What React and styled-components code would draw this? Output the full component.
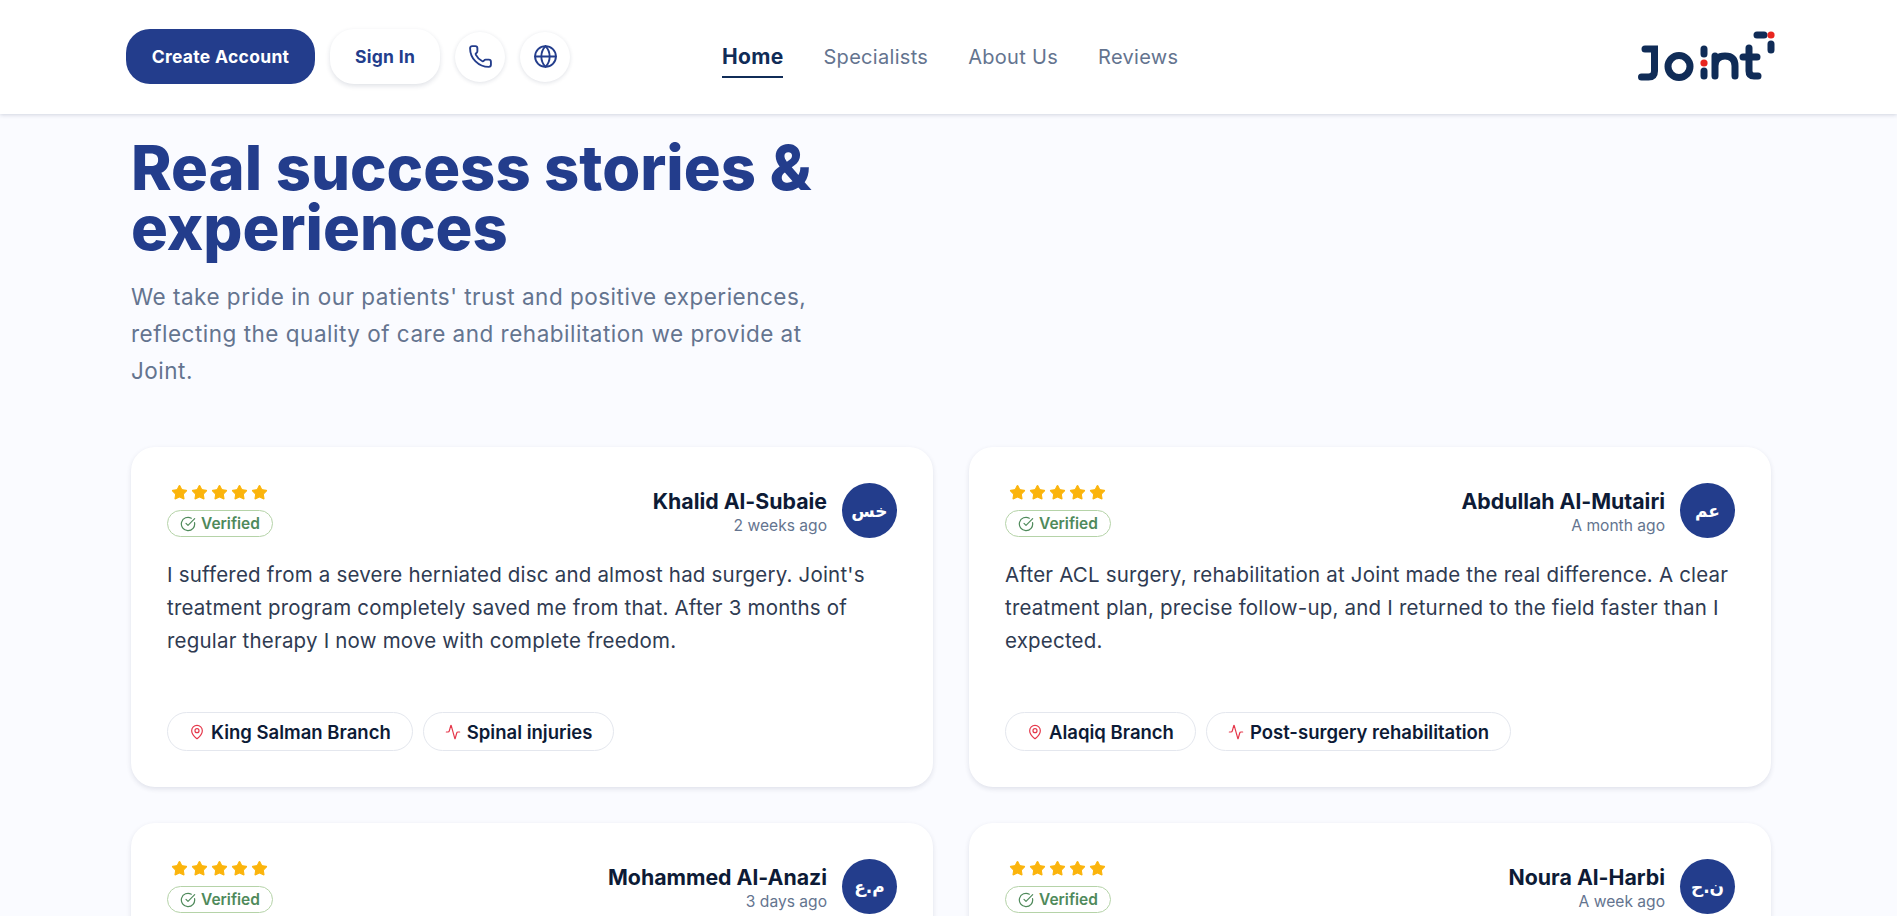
import React from 'react';
import styled, { createGlobalStyle } from 'styled-components';
import { Phone, Globe, CircleCheckBig, MapPin, Activity, Star } from 'lucide-react';

const GlobalStyle = createGlobalStyle`
  html, body {
    margin: 0;
    height: 100%;
    overflow: hidden;
    background: #fafbff;
  }
  body {
    font-family: Inter, "DejaVu Sans", sans-serif;
  }
  * {
    box-sizing: border-box;
  }
`;

const Header = styled.header`
  height: 114px;
  padding: 0 113px 0 126px;
  background: #fff;
  box-shadow: 0 1px 4px rgba(30, 40, 80, 0.18);
  display: grid;
  grid-template-columns: 596px auto 1fr;
  align-items: center;
`;

const Actions = styled.div`
  display: flex;
  align-items: center;
  gap: 15px;
  padding-bottom: 1px;
`;

const PrimaryButton = styled.button`
  width: 189px;
  height: 55px;
  border: 0;
  border-radius: 24px;
  background: #233d8c;
  color: #fff;
  font: 700 17.5px Inter, sans-serif;
  letter-spacing: 0.3px;
`;

const SecondaryButton = styled.button`
  width: 110px;
  height: 55px;
  border: 0;
  border-radius: 24px;
  background: #fff;
  color: #233d8c;
  font: 700 17.5px Inter, sans-serif;
  letter-spacing: 0.3px;
  box-shadow: 0 2px 5px rgba(30, 40, 80, 0.14);
`;

const IconButton = styled.button`
  width: 50px;
  height: 50px;
  border: 0;
  padding: 0;
  border-radius: 50%;
  background: #fff;
  color: #233d8c;
  display: flex;
  align-items: center;
  justify-content: center;
  box-shadow: 0 1px 4px rgba(30, 40, 80, 0.14);
`;

const Nav = styled.nav`
  display: flex;
  gap: 40px;
`;

const NavLink = styled.a`
  padding: 7px 0 5px;
  font-size: ${(p) => (p.$active ? '21px' : '20px')};
  line-height: 28px;
  font-weight: ${(p) => (p.$active ? 700 : 400)};
  letter-spacing: 0.3px;
  color: ${(p) => (p.$active ? '#102c57' : '#64748f')};
  border-bottom: 2px solid ${(p) => (p.$active ? '#102c57' : 'transparent')};
`;

const LogoWrap = styled.div`
  justify-self: end;
  display: flex;
`;

const Main = styled.main`
  padding: 24px 126px 0 131px;
`;

const Title = styled.h1`
  margin: 0;
  width: 740px;
  font-size: 61.5px;
  line-height: 60px;
  font-weight: 800;
  color: #233d8c;
`;

const Lead = styled.p`
  margin: 20px 0 0;
  width: 690px;
  font-size: 22.5px;
  line-height: 37px;
  letter-spacing: 0.5px;
  color: #64748f;
`;

const Grid = styled.section`
  margin-top: 58px;
  display: grid;
  grid-template-columns: 802px 802px;
  gap: 36px;
`;

const Card = styled.article`
  height: 340px;
  padding: 36px 36px 36px;
  background: #fff;
  border-radius: 24px;
  box-shadow: 0 2px 5px rgba(30, 40, 80, 0.12);
  display: flex;
  flex-direction: column;
`;

const CardTop = styled.div`
  display: flex;
  justify-content: space-between;
  align-items: flex-start;
`;

const Rating = styled.div`
  margin-top: 1px;
  display: flex;
  flex-direction: column;
  align-items: flex-start;
  gap: 9px;
`;

const Stars = styled.div`
  display: flex;
  gap: 3px;
  margin-left: 4px;
  color: #fbb40c;
`;

const Verified = styled.span`
  height: 27px;
  padding: 0 12px 0 12px;
  display: flex;
  align-items: center;
  gap: 5px;
  border: 1px solid #b5d3a8;
  border-radius: 14px;
  font-size: 15.5px;
  font-weight: 600;
  color: #4f8a5b;
`;

const Person = styled.div`
  display: flex;
  gap: 15px;
  text-align: right;
`;

const Name = styled.div`
  margin-top: 5px;
  font-size: 21.3px;
  line-height: 27px;
  font-weight: 700;
  color: #0d1b36;
`;

const When = styled.div`
  font-size: 15.6px;
  line-height: 22px;
  color: #64748f;
`;

const Avatar = styled.div`
  width: 55px;
  height: 55px;
  border-radius: 50%;
  background: #233d8c;
  color: #fff;
  display: flex;
  align-items: center;
  justify-content: center;
  font: 700 17px "DejaVu Sans", sans-serif;
`;

const Body = styled.p`
  margin: 20px 0 0;
  font-size: 20.5px;
  line-height: 33px;
  letter-spacing: 0.2px;
  color: #2f3b52;
`;

const Chips = styled.div`
  margin-top: auto;
  display: flex;
  gap: 10px;
`;

const Chip = styled.span`
  height: 39px;
  padding: 0 21px;
  display: flex;
  align-items: center;
  gap: 6px;
  border: 1px solid #e4e7ee;
  border-radius: 20px;
  font-size: 18.5px;
  font-weight: 600;
  color: #0d1b36;
  svg {
    color: #e5384b;
  }
`;

const Logo = () => (
  <svg width="150" height="60" viewBox="1635 27 150 60" fill="none" strokeLinecap="round" strokeWidth="7">
    <g stroke="#102c57">
      <path d="M1646 49h9.5v22q0 6-6 6h-7" />
      <circle cx="1680" cy="66.5" r="11" />
      <path d="M1705 49v5M1705 71v5" />
      <path d="M1716 76V56M1716 66q0-10 10-10t10 10v10" />
      <path d="M1750 48v23q0 5 5 5h4M1744 57h14" />
      <path d="M1758 35h7M1772 44v6" />
    </g>
    <circle cx="1705" cy="63" r="3.6" fill="#e8251f" />
    <circle cx="1772" cy="35" r="3.6" fill="#e8251f" />
  </svg>
);

const reviews = [
  {
    name: 'Khalid Al-Subaie',
    when: '2 weeks ago',
    initials: 'خس',
    text: "I suffered from a severe herniated disc and almost had surgery. Joint's treatment program completely saved me from that. After 3 months of regular therapy I now move with complete freedom.",
    branch: 'King Salman Branch',
    tag: 'Spinal injuries',
  },
  {
    name: 'Abdullah Al-Mutairi',
    when: 'A month ago',
    initials: 'عم',
    text: 'After ACL surgery, rehabilitation at Joint made the real difference. A clear treatment plan, precise follow-up, and I returned to the field faster than I expected.',
    branch: 'Alaqiq Branch',
    tag: 'Post-surgery rehabilitation',
  },
  { name: 'Mohammed Al-Anazi', when: '3 days ago', initials: 'م.ع' },
  { name: 'Noura Al-Harbi', when: 'A week ago', initials: 'ن.ح' },
];

const App = () => (
  <>
    <GlobalStyle />
    <Header>
      <Actions>
        <PrimaryButton>Create Account</PrimaryButton>
        <SecondaryButton>Sign In</SecondaryButton>
        <IconButton><Phone size={25} strokeWidth={1.8} /></IconButton>
        <IconButton><Globe size={25} strokeWidth={1.8} /></IconButton>
      </Actions>
      <Nav>
        <NavLink $active>Home</NavLink>
        <NavLink>Specialists</NavLink>
        <NavLink>About Us</NavLink>
        <NavLink>Reviews</NavLink>
      </Nav>
      <LogoWrap><Logo /></LogoWrap>
    </Header>
    <Main>
      <Title>Real success stories &amp; experiences</Title>
      <Lead>
        We take pride in our patients' trust and positive experiences, reflecting the quality of care and rehabilitation we provide at Joint.
      </Lead>
      <Grid>
        {reviews.map((r) => (
          <Card key={r.name}>
            <CardTop>
              <Rating>
                <Stars>
                  {[0, 1, 2, 3, 4].map((i) => (
                    <Star key={i} size={17} fill="currentColor" strokeWidth={1.5} />
                  ))}
                </Stars>
                <Verified><CircleCheckBig size={16} strokeWidth={1.8} />Verified</Verified>
              </Rating>
              <Person>
                <div>
                  <Name>{r.name}</Name>
                  <When>{r.when}</When>
                </div>
                <Avatar>{r.initials}</Avatar>
              </Person>
            </CardTop>
            {r.text && <Body>{r.text}</Body>}
            {r.branch && (
              <Chips>
                <Chip><MapPin size={16} strokeWidth={1.8} />{r.branch}</Chip>
                <Chip><Activity size={16} strokeWidth={1.8} />{r.tag}</Chip>
              </Chips>
            )}
          </Card>
        ))}
      </Grid>
    </Main>
  </>
);

export default App;
